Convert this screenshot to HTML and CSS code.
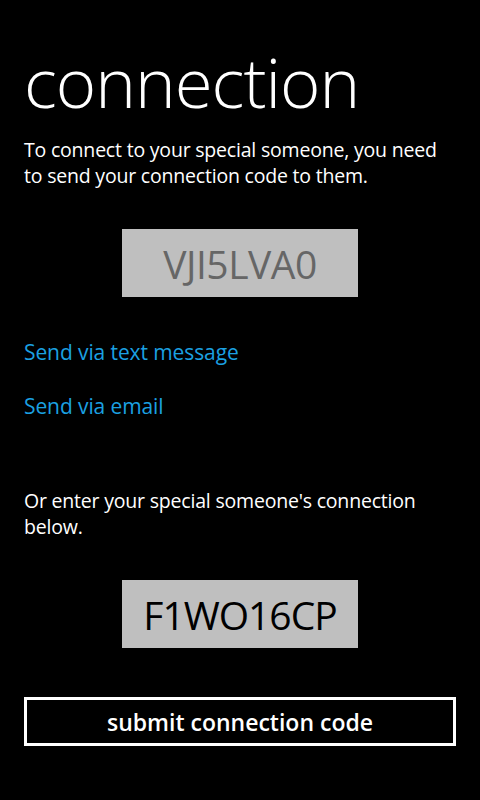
FILE: index.html
```html
<!DOCTYPE html>
<html>
<head>
<meta charset="utf-8">
<link rel="stylesheet" href="styles.css">
</head>
<body>
<main class="page">
  <h1 class="title">connection</h1>
  <p class="text intro">To connect to your special someone, you need to send your connection code to them.</p>
  <div class="code code-mine">VJI5LVA0</div>
  <a class="link link-sms" href="#">Send via text message</a>
  <a class="link link-email" href="#">Send via email</a>
  <p class="text enter">Or enter your special someone's connection below.</p>
  <div class="code code-theirs">F1WO16CP</div>
  <button class="submit">submit connection code</button>
</main>
</body>
</html>
```

FILE: styles.css
```css
html, body {
  margin: 0;
  padding: 0;
  background: #000;
  width: 480px;
  height: 800px;
  overflow: hidden;
}
body {
  font-family: "Open Sans", "Noto Sans", sans-serif;
  color: #fff;
}
.page {
  display: flex;
  flex-direction: column;
  padding: 0 24px;
}
.title {
  margin: 37px 0 0 0;
  font-weight: 300;
  font-size: 69px;
  line-height: 88px;
  letter-spacing: -1px;
}
.text {
  margin: 0;
  font-size: 19.5px;
  line-height: 26px;
  letter-spacing: -0.2px;
}
.intro {
  margin-top: 12px;
}
.code {
  align-self: center;
  width: 236px;
  height: 68px;
  background: #bfbfbf;
  display: flex;
  align-items: center;
  justify-content: center;
  font-size: 39px;
  letter-spacing: -0.5px;
}
.code-mine {
  margin-top: 40px;
  color: #666;
}
.code-theirs {
  margin-top: 40px;
  color: #000;
  letter-spacing: -1px;
}
.link {
  color: #1ba1e2;
  text-decoration: none;
  font-size: 21px;
  line-height: 28px;
  align-self: flex-start;
  letter-spacing: -0.1px;
}
.link-sms {
  margin-top: 41px;
}
.link-email {
  margin-top: 26px;
}
.enter {
  margin-top: 68px;
}
.submit {
  margin-top: 49px;
  height: 49px;
  border: 3px solid #fff;
  background: #000;
  color: #fff;
  font-family: "Open Sans", "Noto Sans", sans-serif;
  font-weight: 600;
  font-size: 23px;
  padding: 0;
}
```
